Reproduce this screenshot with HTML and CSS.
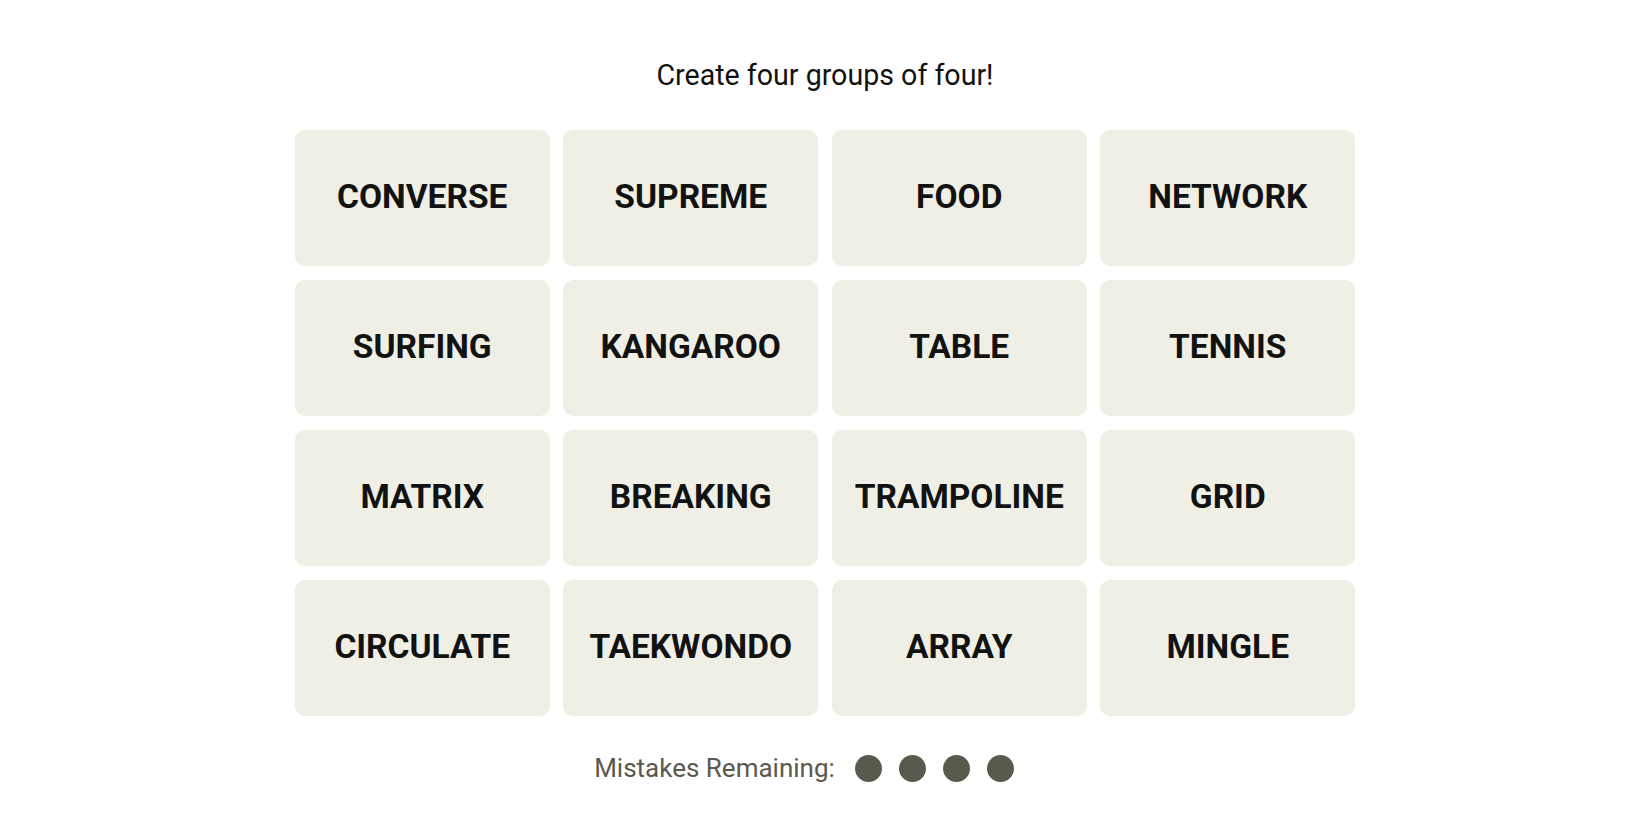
FILE: index.html
```html
<!DOCTYPE html>
<html lang="en">
<head>
<meta charset="utf-8">
<title>Connections</title>
<link rel="stylesheet" href="styles.css">
</head>
<body>
<main class="game">
  <p class="prompt">Create four groups of four!</p>
  <section class="board">
    <button class="tile">CONVERSE</button>
    <button class="tile">SUPREME</button>
    <button class="tile">FOOD</button>
    <button class="tile">NETWORK</button>
    <button class="tile">SURFING</button>
    <button class="tile">KANGAROO</button>
    <button class="tile">TABLE</button>
    <button class="tile">TENNIS</button>
    <button class="tile">MATRIX</button>
    <button class="tile">BREAKING</button>
    <button class="tile">TRAMPOLINE</button>
    <button class="tile">GRID</button>
    <button class="tile">CIRCULATE</button>
    <button class="tile">TAEKWONDO</button>
    <button class="tile">ARRAY</button>
    <button class="tile">MINGLE</button>
  </section>
  <div class="mistakes">
    <span class="mistakes-label">Mistakes Remaining:</span>
    <span class="dots">
      <span class="dot"></span>
      <span class="dot"></span>
      <span class="dot"></span>
      <span class="dot"></span>
    </span>
  </div>
</main>
</body>
</html>
```

FILE: styles.css
```css
html, body {
  margin: 0;
  padding: 0;
  background: #ffffff;
}

body {
  font-family: Roboto, "Liberation Sans", Arial, sans-serif;
  color: #121212;
}

.game {
  display: flex;
  flex-direction: column;
  align-items: center;
  padding-top: 58px;
}

.prompt {
  margin: 0;
  font-size: 28.6px;
  line-height: 34px;
  font-weight: 400;
  color: #121212;
}

.board {
  margin-top: 38px;
  display: grid;
  grid-template-columns: repeat(4, 255px);
  grid-auto-rows: 136px;
  column-gap: 13.5px;
  row-gap: 14px;
}

.tile {
  border: none;
  margin: 0;
  padding: 0 0 3px 0;
  background: #efefe6;
  border-radius: 10px;
  font-family: Roboto, "Liberation Sans", Arial, sans-serif;
  font-weight: 700;
  font-size: 33.5px;
  color: #121212;
  display: flex;
  align-items: center;
  justify-content: center;
}

.mistakes {
  margin-top: 35px;
  display: flex;
  align-items: center;
  height: 34px;
  padding-right: 42px;
}

.mistakes-label {
  font-size: 26px;
  color: #5a594e;
  font-weight: 400;
}

.dots {
  display: flex;
  gap: 17px;
  margin-left: 20px;
}

.dot {
  width: 27px;
  height: 27px;
  border-radius: 50%;
  background: #5a594e;
}
```
